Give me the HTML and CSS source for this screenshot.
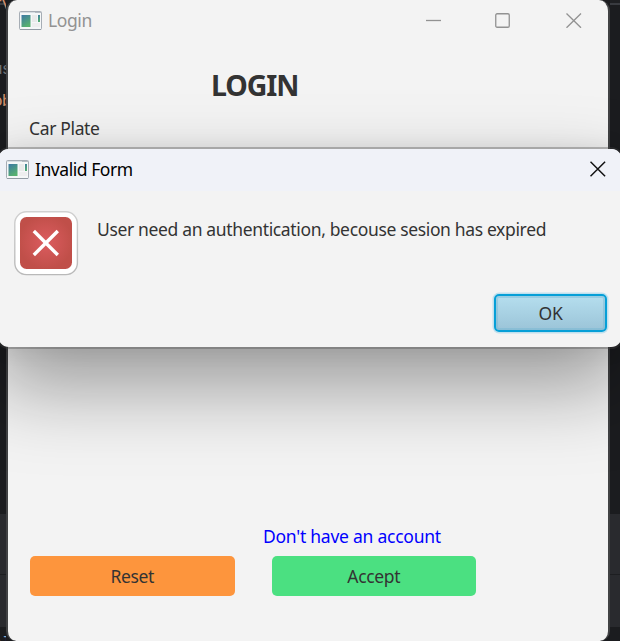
FILE: index.html
```
<!DOCTYPE html>
<html lang="en">
<head>
<meta charset="utf-8">
<title>Login</title>
<link rel="stylesheet" href="styles.css">
</head>
<body>
<svg class="defs" aria-hidden="true">
  <defs>
    <linearGradient id="pane" x1="0" y1="0" x2=".5" y2="1"><stop offset="0" stop-color="#3c78a5"/><stop offset="1" stop-color="#57b070"/></linearGradient>
    <symbol id="app-icon" viewBox="0 0 23 19">
      <rect x=".5" y=".5" width="22" height="18" rx="1" fill="#f5f7f8" stroke="#a6adb5"/>
      <path d="M1 1.5h15" stroke="#d8dee3"/><path d="M16 1.5h6" stroke="#b5bcc4"/>
      <path d="M1 18.5h21" stroke="#929ba4"/>
      <rect x="2.5" y="4" width="9" height="12" fill="url(#pane)"/>
      <rect x="13" y="4" width="5" height="7" fill="#e9eaea"/>
      <rect x="13" y="12" width="8" height="4" fill="#eeeeef"/>
      <rect x="19" y="4" width="2" height="7" fill="url(#pane)"/>
    </symbol>
  </defs>
</svg>
<div class="desktop">
  <aside class="editor editor-left">
    <span class="code code-top">rv</span>
    <span class="code code-grey">us</span>
    <span class="code code-orange">ob</span>
    <span class="code code-foot">Al</span>
  </aside>
  <main class="window">
    <header class="titlebar">
      <svg class="app-icon"><use href="#app-icon"/></svg>
      <span class="window-title">Login</span>
      <div class="controls">
        <svg width="16" height="16"><path d="M1 8.5h15"/></svg>
        <svg width="16" height="16"><rect x=".75" y="1.75" width="13.5" height="13.5" rx="1.3"/></svg>
        <svg width="16" height="16"><path d="M.5 1.5l14.5 14.3M15 1.5L.5 15.8"/></svg>
      </div>
    </header>
    <form class="login">
      <h1>LOGIN</h1>
      <label class="plate">Car Plate</label>
      <a class="account">Don't have an account</a>
      <div class="actions">
        <button type="button" class="reset">Reset</button>
        <button type="button" class="accept">Accept</button>
      </div>
    </form>
  </main>
  <aside class="editor editor-right"></aside>

  <section class="dialog" role="dialog">
    <header class="dialog-bar">
      <svg class="app-icon"><use href="#app-icon"/></svg>
      <span class="dialog-title">Invalid Form</span>
      <svg class="close" width="16" height="16"><path d="M.5 .8l14.6 14.4M15.1 .8L.5 15.2"/></svg>
    </header>
    <div class="dialog-body">
      <svg class="error" width="65" height="65" viewBox="0 0 65 65">
        <defs>
          <radialGradient id="red" cx=".5" cy=".48" r=".52"><stop offset="0" stop-color="#dc5c5f"/><stop offset="1" stop-color="#c04f49"/></radialGradient>
          <linearGradient id="rim" x1="0" y1="0" x2="0" y2="1"><stop offset="0" stop-color="#d0d0d0"/><stop offset="1" stop-color="#b9b9b9"/></linearGradient>
        </defs>
        <rect x=".8" y=".8" width="62.6" height="62.8" rx="11.5" fill="#fff" stroke="url(#rim)" stroke-width="1.4"/>
        <rect x="6" y="6" width="52" height="52" rx="6.5" fill="url(#red)"/>
        <path d="M19.8 20l24 24M43.8 20l-24 24" fill="none" stroke="#fff" stroke-width="3.4"/>
      </svg>
      <p class="message">User need an authentication, becouse sesion has expired</p>
    </div>
    <footer class="dialog-actions"><button type="button" class="ok">OK</button></footer>
  </section>
</div>
</body>
</html>
```
FILE: styles.css
```
* { box-sizing: border-box; }
body { margin: 0; font: 17.5px/24px "Noto Sans", "Open Sans", sans-serif; letter-spacing: -.35px; color: #333; overflow: hidden; }
.defs { position: absolute; width: 0; height: 0; }
.desktop { position: relative; display: grid; grid-template-columns: 6px 604px 10px; width: 620px; height: 641px; overflow: hidden; background: #1b1c1f; }
.editor { overflow: hidden; background: linear-gradient(#1e1f22 0 3px, #393b40 3px 5px, #1b1c1f 5px 514px, #292a2e 514px 574px, #1d1e21 574px 575px, #292a2e 575px 627px, #1b1c1f 627px); }
.editor-left { display: flex; flex-direction: column; font: 17px/20px "Liberation Mono", monospace; letter-spacing: -1px; }
.code { display: flex; justify-content: flex-end; width: 11px; height: 20px; flex: none; }
.code-top { margin-top: -5px; color: #cf8e6d; }
.code-grey { margin-top: 45px; color: #6f737a; }
.code-orange { margin-top: 12px; color: #cf8e6d; }
.code-foot { margin-top: 522px; color: #83add4; }
.window { display: flex; flex-direction: column; height: 641px; border: solid #414244; border-width: 0 2px; border-radius: 11px 11px 10px 10px; background: #f3f3f3; }
.titlebar { display: flex; align-items: center; height: 42px; padding: 0 26px 2px 11px; color: #929292; }
.app-icon { width: 23px; height: 19px; flex: none; }
.window-title { margin-left: 6px; letter-spacing: -.4px; }
.controls { display: flex; gap: 54px; margin-left: auto; }
.controls svg { fill: none; stroke: #929292; stroke-width: 1.3; }
.controls svg:nth-child(2) { margin-right: 1px; }
.login { display: flex; flex-direction: column; flex: 1; }
h1 { margin: 24px 0 0 203px; font-size: 28.5px; line-height: 38px; letter-spacing: -1.1px; }
.plate { margin: 12px 0 0 21px; }
.account { margin: auto 0 0 255px; color: #00f; letter-spacing: -.25px; }
.actions { display: flex; gap: 37px; margin: 8px 0 45px 22px; }
button { padding: 0 0 1px; border: 0; font: inherit; letter-spacing: inherit; color: #333; }
.reset, .accept { width: 204.5px; height: 40px; border-radius: 5px; }
.reset { background: #fd953d; }
.accept { background: #4be081; }
.dialog { position: absolute; left: -2px; top: 149px; width: 624px; height: 198px; display: flex; flex-direction: column; border-radius: 11px; background: #f3f3f3; box-shadow: 0 0 0 2px rgba(70,70,70,.34), 0 0 24px rgba(0,0,0,.08), 0 37px 80px 4px rgba(0,0,0,.36); }
.dialog-bar { display: flex; align-items: center; height: 42px; padding: 0 16px 2px 8px; border-radius: 11px 11px 0 0; background: #f0f2f8; color: #000; }
.dialog-title { margin-left: 6px; letter-spacing: -.45px; }
.close { margin-left: auto; fill: none; stroke: #111; stroke-width: 1.5; }
.dialog-body { display: flex; gap: 18px; padding: 20px 0 0 16px; }
.message { margin: 6px 0 0; white-space: nowrap; }
.dialog-actions { display: flex; justify-content: flex-end; margin-top: 18px; padding-right: 15px; }
.ok { width: 113px; height: 38px; padding: 0; border: 2px solid #069fd7; border-radius: 5px; background: linear-gradient(#b5deee, #9bc4d8); box-shadow: 0 0 0 1.5px #bfe0ee, inset 0 0 0 2px rgba(110,180,210,.4); }
```
